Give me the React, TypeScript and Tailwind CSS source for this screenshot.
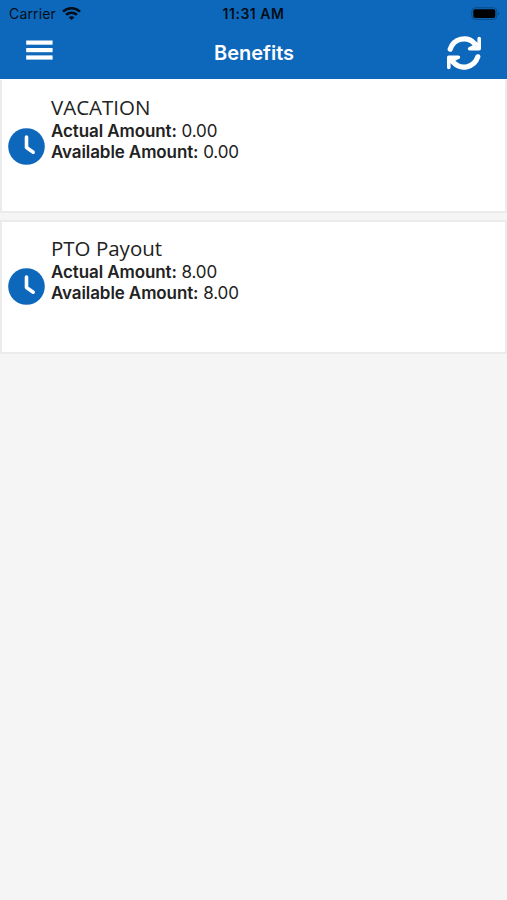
interface Benefit {
  name: string;
  actual: string;
  available: string;
}

const benefits: Benefit[] = [
  { name: 'VACATION', actual: '0.00', available: '0.00' },
  { name: 'PTO Payout', actual: '8.00', available: '8.00' },
];

const WifiIcon = () => (
  <svg width="19" height="14" viewBox="0 0 18 14" preserveAspectRatio="none" fill="none" stroke="#020d18" strokeWidth="2.6">
    <path d="M0.9 4.6C5.4 0.1 12.6 0.1 17.1 4.6" />
    <path d="M3.9 7.9C6.8 5.1 11.2 5.1 14.1 7.9" />
    <path d="M9 13L6.2 10.2C7.8 8.8 10.2 8.8 11.8 10.2Z" fill="#020d18" stroke="none" />
  </svg>
);

const BatteryIcon = () => (
  <svg width="30" height="14" viewBox="0 0 30 14" fill="none">
    <rect x="1.8" y="0.8" width="25" height="11.6" rx="3.6" stroke="#084b88" strokeWidth="1" />
    <rect x="3.3" y="2.3" width="22" height="8.6" rx="2" fill="#000" />
    <path d="M28 4.8V8.6C29.4 8 29.4 5.4 28 4.8Z" fill="#084b88" />
  </svg>
);

const MenuIcon = () => (
  <svg width="27" height="20" viewBox="0 0 27 20" fill="#fff">
    <rect x="0.2" y="0.5" width="26.4" height="4.2" />
    <rect x="0.2" y="8" width="26.4" height="4.2" />
    <rect x="0.2" y="15.4" width="26.4" height="4.2" />
  </svg>
);

const RefreshIcon = () => (
  <svg width="36" height="34" viewBox="0 0 36 34" fill="none" stroke="#fff">
    <path d="M4.2 13.2C7.6 2.6 21 -0.6 28.4 7.4L31 10" strokeWidth="5.2" strokeLinecap="round" />
    <path d="M33.2 2.6V12.8H23.6L33.2 8Z" fill="#fff" strokeWidth="3.6" strokeLinejoin="round" />
    <path d="M31.8 20.8C28.4 31.4 15 34.6 7.6 26.6L5 24" strokeWidth="5.2" strokeLinecap="round" />
    <path d="M2.8 31.4V21.2H12.4L2.8 26Z" fill="#fff" strokeWidth="3.6" strokeLinejoin="round" />
  </svg>
);

const ClockIcon = () => (
  <svg width="37" height="37" viewBox="0 0 37 37" fill="none">
    <circle cx="18.5" cy="18.5" r="18.3" fill="#0d68bb" />
    <path
      d="M18.5 9V19.6L25.2 24.2"
      stroke="#fff"
      strokeWidth="3.6"
      strokeLinecap="round"
      strokeLinejoin="round"
    />
  </svg>
);

const BenefitCard = ({ benefit }: { benefit: Benefit }) => (
  <div className="flex h-[134px] border-2 border-[#ebebeb] bg-white pl-1.5 first:border-t-white">
    <div className="flex w-[43px] shrink-0 items-center">
      <ClockIcon />
    </div>
    <div className="pt-[13px] text-[17px] leading-[21px] tracking-[-0.1px] text-[#222]">
      <h2 className="font-['Open_Sans',sans-serif] text-[20.5px] leading-[27px] tracking-normal">{benefit.name}</h2>
      <p>
        <span className="font-semibold">Actual Amount:</span> {benefit.actual}
      </p>
      <p>
        <span className="font-semibold">Available Amount:</span> {benefit.available}
      </p>
    </div>
  </div>
);

const App = () => {
  return (
    <div className="min-h-screen bg-[#f5f5f5] font-['Inter',sans-serif]">
      <header className="h-[79px] bg-[#0d68bb]">
        {/* Status bar */}
        <div className="grid h-[27px] grid-cols-3 items-center pl-[9px] pr-[7px] text-sm text-[#020d18]">
          <div className="flex items-center gap-1.5">
            <span className="tracking-[0.15px]">Carrier</span>
            <WifiIcon />
          </div>
          <span className="pr-0.5 text-center font-semibold tracking-[0.5px]">11:31 AM</span>
          <div className="flex justify-end">
            <BatteryIcon />
          </div>
        </div>

        {/* Navigation */}
        <div className="grid h-[50px] grid-cols-3 items-center pl-[26px] pr-[25px]">
          <button type="button" aria-label="Menu" className="mb-1 flex">
            <MenuIcon />
          </button>
          <h1 className="pt-px text-center text-xl font-semibold text-white">Benefits</h1>
          <button type="button" aria-label="Refresh" className="flex justify-end pt-0.5">
            <RefreshIcon />
          </button>
        </div>
      </header>

      <main className="flex flex-col gap-[6.5px]">
        {benefits.map((benefit) => (
          <BenefitCard key={benefit.name} benefit={benefit} />
        ))}
      </main>
    </div>
  );
};

export default App;
